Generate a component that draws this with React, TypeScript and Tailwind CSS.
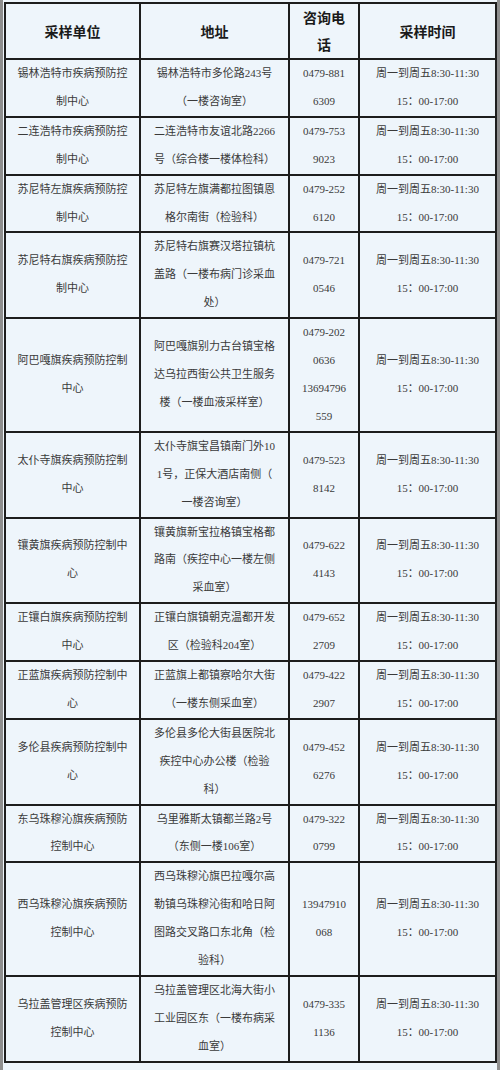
import React from 'react';

type Row = {
  unit: string[];
  address: string[];
  phone: string[];
};

const TIME = ['周一到周五8:30-11:30', '15：00-17:00'];

const rows: Row[] = [
  {
    unit: ['锡林浩特市疾病预防控', '制中心'],
    address: ['锡林浩特市多伦路243号', '（一楼咨询室）'],
    phone: ['0479-881', '6309'],
  },
  {
    unit: ['二连浩特市疾病预防控', '制中心'],
    address: ['二连浩特市友谊北路2266', '号（综合楼一楼体检科）'],
    phone: ['0479-753', '9023'],
  },
  {
    unit: ['苏尼特左旗疾病预防控', '制中心'],
    address: ['苏尼特左旗满都拉图镇恩', '格尔南街（检验科）'],
    phone: ['0479-252', '6120'],
  },
  {
    unit: ['苏尼特右旗疾病预防控', '制中心'],
    address: ['苏尼特右旗赛汉塔拉镇杭', '盖路（一楼布病门诊采血', '处）'],
    phone: ['0479-721', '0546'],
  },
  {
    unit: ['阿巴嘎旗疾病预防控制', '中心'],
    address: ['阿巴嘎旗别力古台镇宝格', '达乌拉西街公共卫生服务', '楼（一楼血液采样室）'],
    phone: ['0479-202', '0636', '13694796', '559'],
  },
  {
    unit: ['太仆寺旗疾病预防控制', '中心'],
    address: ['太仆寺旗宝昌镇南门外10', '1号，正保大酒店南侧（', '一楼咨询室）'],
    phone: ['0479-523', '8142'],
  },
  {
    unit: ['镶黄旗疾病预防控制中', '心'],
    address: ['镶黄旗新宝拉格镇宝格都', '路南（疾控中心一楼左侧', '采血室）'],
    phone: ['0479-622', '4143'],
  },
  {
    unit: ['正镶白旗疾病预防控制', '中心'],
    address: ['正镶白旗镇朝克温都开发', '区（检验科204室）'],
    phone: ['0479-652', '2709'],
  },
  {
    unit: ['正蓝旗疾病预防控制中', '心'],
    address: ['正蓝旗上都镇察哈尔大街', '（一楼东侧采血室）'],
    phone: ['0479-422', '2907'],
  },
  {
    unit: ['多伦县疾病预防控制中', '心'],
    address: ['多伦县多伦大街县医院北', '疾控中心办公楼（检验', '科）'],
    phone: ['0479-452', '6276'],
  },
  {
    unit: ['东乌珠穆沁旗疾病预防', '控制中心'],
    address: ['乌里雅斯太镇都兰路2号', '（东侧一楼106室）'],
    phone: ['0479-322', '0799'],
  },
  {
    unit: ['西乌珠穆沁旗疾病预防', '控制中心'],
    address: ['西乌珠穆沁旗巴拉嘎尔高', '勒镇乌珠穆沁街和哈日阿', '图路交叉路口东北角（检', '验科）'],
    phone: ['13947910', '068'],
  },
  {
    unit: ['乌拉盖管理区疾病预防', '控制中心'],
    address: ['乌拉盖管理区北海大街小', '工业园区东（一楼布病采', '血室）'],
    phone: ['0479-335', '1136'],
  },
];

function Lines({ lines }: { lines: string[] }) {
  return (
    <>
      {lines.map((line, i) => (
        <div key={i} className="whitespace-nowrap">
          {line}
        </div>
      ))}
    </>
  );
}

export default function App() {
  const cell =
    'border-2 border-[#1d1d1d] p-0 text-center align-middle text-[11px] leading-[27.9px] text-[#3a3a3a]';
  const head =
    'border-2 border-[#1d1d1d] p-0 text-center align-middle text-[14px] font-bold leading-[27px] text-[#1a1a1a]';

  return (
    <div
      className="flex h-[1070px] w-[500px] bg-[#eef5fb]"
      style={{ fontFamily: '"Liberation Serif", "Noto Sans CJK SC", serif' }}
    >
      <div className="w-[3px] shrink-0 bg-[#8e8e8e]" />
      <div className="flex-1 pt-[2px] pl-[1px]">
        <table className="w-[491px] table-fixed border-collapse">
          <colgroup>
            <col className="w-[135px]" />
            <col className="w-[149px]" />
            <col className="w-[70px]" />
            <col className="w-[137px]" />
          </colgroup>
          <thead>
            <tr className="font-['Noto_Sans_CJK_SC',sans-serif]">
              <th className={head}>采样单位</th>
              <th className={head}>地址</th>
              <th className={head}>
                <div>咨询电</div>
                <div>话</div>
              </th>
              <th className={head}>采样时间</th>
            </tr>
          </thead>
          <tbody>
            {rows.map((row, i) => (
              <tr key={i}>
                <td className={cell}>
                  <Lines lines={row.unit} />
                </td>
                <td className={cell}>
                  <Lines lines={row.address} />
                </td>
                <td className={cell}>
                  <Lines lines={row.phone} />
                </td>
                <td className={cell}>
                  <Lines lines={TIME} />
                </td>
              </tr>
            ))}
          </tbody>
        </table>
      </div>
      <div className="w-[4px] shrink-0 bg-[#8e8e8e]" />
    </div>
  );
}
